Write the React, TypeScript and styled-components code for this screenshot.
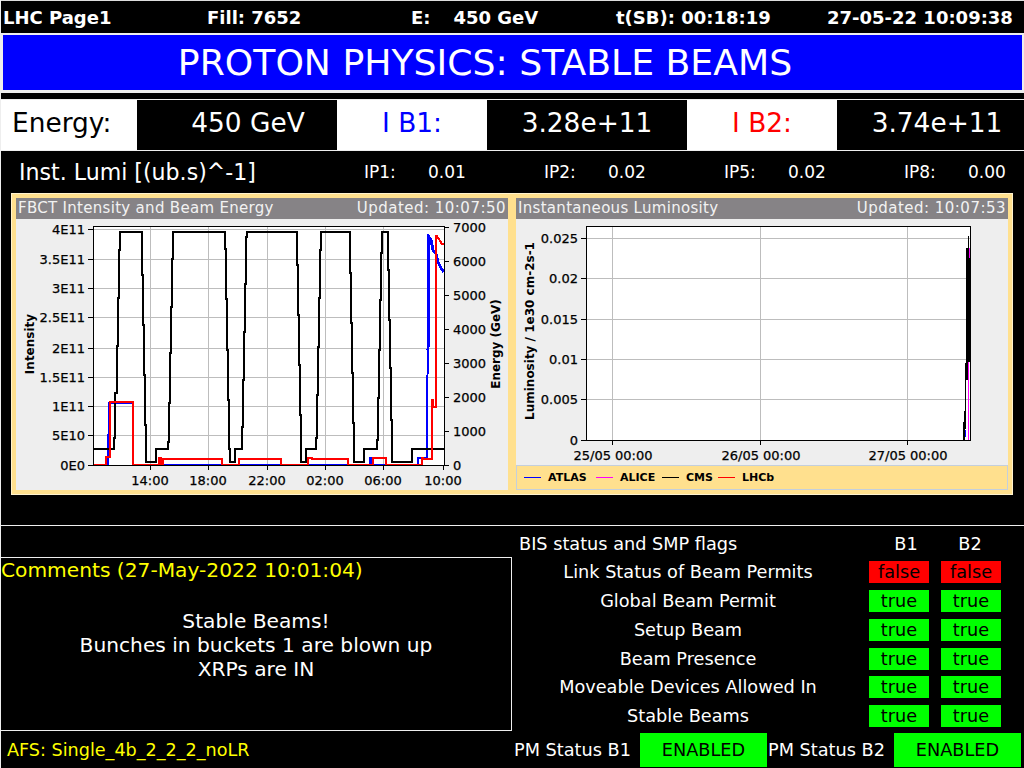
import React from 'react';
import styled, { createGlobalStyle } from 'styled-components';

const GlobalStyle = createGlobalStyle`
  html, body {
    margin: 0;
    padding: 0;
    background: #000;
  }
  body {
    font-family: "DejaVu Sans", "Liberation Sans", sans-serif;
    color: #fff;
  }
`;

const Page = styled.div`
  width: 1024px;
  height: 768px;
  box-sizing: border-box;
  overflow: hidden;
  background: #000;
  border-left: 1px solid #eee;
  display: flex;
  flex-direction: column;
`;

const TopBar = styled.div`
  height: 33px;
  box-sizing: border-box;
  border-top: 1px solid #ddd;
  display: grid;
  grid-template-columns: 204px 204px 205px 211px 197px;
  align-items: center;
  font-size: 18px;
  font-weight: bold;
  white-space: pre;
  padding-left: 2px;
`;

const TopValue = styled.span`
  margin-left: 23px;
`;

const Banner = styled.div`
  height: 60px;
  box-sizing: border-box;
  border-style: solid;
  border-color: #eee;
  border-width: 2px 2px 3px 2px;
  background: #0000ff;
  display: flex;
  align-items: center;
  justify-content: center;
  font-size: 36.2px;
  padding-right: 55px;
`;

const Measures = styled.div`
  margin-top: 6px;
  height: 52px;
  box-sizing: border-box;
  border-top: 1px solid #eee;
  border-bottom: 1px solid #eee;
  display: grid;
  grid-template-columns: 136px 200px 150px 200px 150px 187px;
  font-size: 26.4px;
`;

const MeasureLabel = styled.div<{ $color: string; $left?: boolean }>`
  background: #fff;
  color: ${(p) => p.$color};
  display: flex;
  align-items: center;
  justify-content: ${(p) => (p.$left ? 'flex-start' : 'center')};
  padding-left: ${(p) => (p.$left ? '11px' : '0')};
  padding-bottom: 5px;
  box-sizing: border-box;
`;

const MeasureValue = styled.div<{ $shift?: number }>`
  background: #000;
  display: flex;
  align-items: center;
  justify-content: center;
  padding-left: ${(p) => p.$shift ?? 0}px;
  padding-bottom: 5px;
  box-sizing: border-box;
`;

const Middle = styled.div`
  height: 375px;
  box-sizing: border-box;
  border-bottom: 1px solid #eee;
  display: flex;
  flex-direction: column;
`;

const LumiRow = styled.div`
  height: 42px;
  display: grid;
  grid-template-columns: 344px 180px 180px 180px 1fr;
  align-items: center;
  padding-left: 18px;
  font-size: 17px;
`;

const LumiTitle = styled.div`
  font-size: 22.1px;
`;

const LumiPoint = styled.div`
  display: grid;
  grid-template-columns: 64px 1fr;
  padding-left: 1px;
`;

const ChartFrame = styled.div`
  width: 992px;
  height: 292px;
  margin-left: 10px;
  padding: 4px;
  border: 1px solid #fff3cf;
  background: #ffe08e;
  display: grid;
  grid-template-columns: 492px 492px;
  column-gap: 8px;
`;

const Chart = styled.div`
  background: #eee;
  display: flex;
  flex-direction: column;
`;

const ChartHead = styled.div`
  height: 21px;
  box-sizing: border-box;
  background: #868386;
  color: #f2f2f2;
  font-size: 15px;
  display: flex;
  align-items: center;
  justify-content: space-between;
  padding: 0 2px 1px;
  letter-spacing: 0.3px;
`;

const ChartStamp = styled.span`
  letter-spacing: 0.48px;
`;

const ChartCanvas = styled.svg`
  display: block;
  font-family: "DejaVu Sans", sans-serif;
  font-size: 13px;
  fill: #000;
  stroke: #000;
  stroke-width: 0.25px;
`;

const Legend = styled.div`
  height: 25px;
  box-sizing: border-box;
  background: #ffe08e;
  border: 1px solid #c4cfdc;
  display: flex;
  align-items: center;
  padding-left: 7px;
  font-size: 11px;
  font-weight: bold;
  color: #000;
`;

const LegendItem = styled.span<{ $color: string; $width: number }>`
  display: flex;
  align-items: center;
  width: ${(p) => p.$width}px;
  &::before {
    content: '';
    width: 17px;
    height: 1px;
    background: ${(p) => p.$color};
    margin-right: 7px;
  }
`;

const Bottom = styled.div`
  flex: 1;
  display: grid;
  grid-template-columns: 511px 512px;
`;

const CommentsColumn = styled.div`
  padding-top: 31px;
  display: flex;
  flex-direction: column;
`;

const CommentsBox = styled.div`
  height: 174px;
  box-sizing: border-box;
  border: 1px solid #eee;
  border-left: none;
  display: flex;
  flex-direction: column;
`;

const CommentsTitle = styled.div`
  color: #ffff00;
  font-size: 20.2px;
  line-height: 25px;
`;

const CommentsBody = styled.div`
  font-size: 20.2px;
  line-height: 24px;
  text-align: center;
  margin-top: 26px;
`;

const Afs = styled.div`
  color: #ffff00;
  font-size: 17.6px;
  padding: 9px 0 0 6px;
`;

const FlagsColumn = styled.div`
  display: flex;
  flex-direction: column;
  padding-top: 6px;
`;

const FlagRow = styled.div`
  display: grid;
  grid-template-columns: 352px 60px 60px;
  column-gap: 0;
  height: 28.85px;
  align-items: center;
  font-size: 17.7px;
  text-align: center;
`;

const ChipPair = styled.div`
  display: grid;
  grid-template-columns: 60px 60px;
  column-gap: 12px;
  grid-column: 2 / 4;
  padding-left: 5px;
`;

const FlagHead = styled(FlagRow)`
  height: 24px;
  margin-bottom: 1.6px;
`;

const FlagHeadTitle = styled.div`
  text-align: left;
  padding-left: 7px;
`;

const HeadPair = styled(ChipPair)`
  column-gap: 4px;
  padding-left: 12px;
`;

const Chip = styled.div<{ $ok: boolean }>`
  height: 22px;
  line-height: 22px;
  text-align: center;
  color: #000;
  background: ${(p) => (p.$ok ? '#00ff00' : '#ff0000')};
`;

const PmRow = styled.div`
  margin-top: 2.3px;
  display: grid;
  grid-template-columns: 126px 128px 126px 128px;
  height: 34px;
  align-items: center;
  font-size: 17.7px;
  padding-left: 2px;
`;

const PmChip = styled.div`
  height: 34px;
  line-height: 34px;
  background: #00ff00;
  color: #000;
  text-align: center;
  margin-right: 1px;
`;

type Pt = [number, number];

const TOP = 232;
const BOT = 462;
const MID = 449;

const energy: Pt[] = [
  [93, MID], [114, MID], [114, 438], [115, 438], [115, 393], [117, 393], [117, 346], [118, 346], [118, 298], [119, 298], [119, 250], [120, 250], [120, TOP],
  [142, TOP], [142, 275], [143, 275], [143, 325], [144, 325], [144, 375], [145, 375], [145, 425], [146, 425], [146, BOT],
  [156, BOT], [156, MID], [168, MID], [168, 442], [169, 442], [169, 403], [170, 403], [170, 353], [171, 353], [171, 307], [172, 307], [172, 259], [173, 259], [173, TOP],
  [225, TOP], [225, 249], [226, 249], [226, 299], [227, 299], [227, 350], [228, 350], [228, 400], [229, 400], [229, MID], [230, MID], [230, BOT],
  [235, BOT], [235, MID], [242, MID], [242, 427], [243, 427], [243, 380], [244, 380], [244, 332], [245, 332], [245, 284], [246, 284], [246, 237], [247, 237], [247, TOP],
  [297, TOP], [297, 265], [298, 265], [298, 315], [299, 315], [299, 365], [300, 365], [300, 415], [301, 415], [301, BOT],
  [306, BOT], [306, MID], [316, MID], [316, 438], [317, 438], [317, 395], [318, 395], [318, 347], [319, 347], [319, 298], [320, 298], [320, 250], [321, 250], [321, TOP],
  [350, TOP], [350, 273], [351, 273], [351, 323], [352, 323], [352, 373], [353, 373], [353, 423], [354, 423], [354, BOT],
  [364, BOT], [364, MID], [377, MID], [377, 440], [378, 440], [378, 398], [379, 398], [379, 350], [380, 350], [380, 300], [381, 300], [381, 253], [382, 253], [382, TOP],
  [388, TOP], [388, 270], [389, 270], [389, 320], [390, 320], [390, 368], [391, 368], [391, 420], [392, 420], [392, BOT],
  [412, BOT], [412, MID], [444, MID],
];

const beamOne: Pt[] = [
  [93, 465], [108, 465], [109, 403], [133, 403], [133, 465], [370, 465], [370, 458], [372, 458], [372, 465], [418, 465], [418, 458], [427, 458],
  [427, 400], [428, 350],
];

// the last fill of beam 1 is drawn heavier
const beamOneTail: Pt[] = [
  [428, 350], [429, 237], [431, 240], [433, 250], [436, 254], [438, 262], [441, 268], [444, 272],
];

const beamTwo: Pt[] = [
  [93, 465], [106, 465], [106, 457], [110, 457], [110, 402], [133, 402], [133, 465],
  [159, 465], [159, 458], [161, 458], [161, 465], [163, 465], [163, 459], [222, 459], [222, 465], [239, 465], [239, 459], [281, 459], [281, 465],
  [308, 465], [308, 458], [312, 458], [312, 459], [348, 459], [348, 465], [373, 465], [373, 458], [386, 458], [386, 465],
  [420, 465], [422, 465], [422, 458], [423, 458], [423, 459], [432, 459], [432, 400], [433, 400], [433, 407], [436, 407], [436, 236], [437, 236], [442, 244], [444, 244],
];

const toPoints = (pts: Pt[]) => pts.map(([x, y]) => `${x},${y}`).join(' ');

const leftRows: [string, number][] = [
  ['4E11', 229], ['3.5E11', 259], ['3E11', 288], ['2.5E11', 317], ['2E11', 348],
  ['1.5E11', 377], ['1E11', 406], ['5E10', 435], ['0E0', 465],
];
const leftTimes: [string, number][] = [
  ['14:00', 150], ['18:00', 208], ['22:00', 267], ['02:00', 325], ['06:00', 383], ['10:00', 443],
];
const energyTicks: [string, number][] = [
  ['7000', 227], ['6000', 261], ['5000', 295], ['4000', 329], ['3000', 363], ['2000', 397], ['1000', 431], ['0', 465],
];
const lumiRows: [string, number][] = [
  ['0.025', 238], ['0.02', 278], ['0.015', 319], ['0.01', 359], ['0.005', 399], ['0', 440],
];
const lumiDays: [string, number][] = [
  ['25/05 00:00', 613], ['26/05 00:00', 761], ['27/05 00:00', 908],
];

const GRID = '#bdbdbd';

const BeamChart = () => (
  <ChartCanvas width={492} height={271} viewBox="16 219 492 271">
    <rect x={93} y={226} width={351} height={239} fill="#fff" stroke="none" />
    <g shapeRendering="crispEdges" strokeWidth={1}>
      {leftRows.slice(0, -1).map(([, y]) => (
        <line key={y} x1={93} x2={444} y1={y} y2={y} stroke={GRID} />
      ))}
      {leftTimes.slice(0, -1).map(([, x]) => (
        <line key={x} x1={x} x2={x} y1={226} y2={465} stroke={GRID} />
      ))}
      {leftRows.map(([, y]) => (
        <line key={y} x1={88} x2={93} y1={y} y2={y} stroke="#000" />
      ))}
      {leftTimes.map(([, x]) => (
        <line key={x} x1={x} x2={x} y1={465} y2={470} stroke="#000" />
      ))}
      {energyTicks.map(([, y]) => (
        <line key={y} x1={444} x2={449} y1={y} y2={y} stroke="#000" />
      ))}
    </g>
    <g shapeRendering="crispEdges" fill="none" strokeWidth={2}>
      <polyline points={toPoints(beamOne)} stroke="#0000ff" />
      <polyline points={toPoints(beamOneTail)} stroke="#0000ff" strokeWidth={3} />
      <polyline points={toPoints(energy)} stroke="#000" />
      <polyline points={toPoints(beamTwo)} stroke="#ff0000" />
    </g>
    <rect x={93.5} y={226.5} width={351} height={239} fill="none" stroke="#000" strokeWidth={1} shapeRendering="crispEdges" />
    {leftRows.map(([t, y]) => (
      <text key={t} x={85} y={y + 5} textAnchor="end">{t}</text>
    ))}
    {leftTimes.map(([t, x]) => (
      <text key={t} x={x} y={485} textAnchor="middle">{t}</text>
    ))}
    {energyTicks.map(([t, y]) => (
      <text key={t} x={453} y={y + 5}>{t}</text>
    ))}
    <text transform="translate(34 344) rotate(-90)" textAnchor="middle" fontWeight="bold" fontSize={12} strokeWidth={0}>Intensity</text>
    <text transform="translate(500 344) rotate(-90)" textAnchor="middle" fontWeight="bold" fontSize={12} strokeWidth={0}>Energy (GeV)</text>
  </ChartCanvas>
);

const LumiChart = () => (
  <ChartCanvas width={492} height={246} viewBox="516 219 492 246">
    <rect x={586} y={226} width={384} height={214} fill="#fff" stroke="none" />
    <g shapeRendering="crispEdges" strokeWidth={1}>
      {lumiRows.slice(0, -1).map(([, y]) => (
        <line key={y} x1={586} x2={970} y1={y} y2={y} stroke={GRID} />
      ))}
      {[612, 760, 907].map((x) => (
        <line key={x} x1={x} x2={x} y1={226} y2={440} stroke={GRID} />
      ))}
      {lumiRows.map(([, y]) => (
        <line key={y} x1={581} x2={586} y1={y} y2={y} stroke="#000" />
      ))}
      {[612, 760, 907].map((x) => (
        <line key={x} x1={x} x2={x} y1={440} y2={445} stroke="#000" />
      ))}
    </g>
    <g shapeRendering="crispEdges" stroke="none">
      <rect x={963} y={422} width={1} height={18} fill="#000" />
      <rect x={964} y={411} width={1} height={29} fill="#000" />
      <rect x={965} y={363} width={1} height={66} fill="#000" />
      <rect x={966} y={248} width={2} height={132} fill="#000" />
      <rect x={968} y={254} width={2} height={108} fill="#000" />
      <rect x={968} y={236} width={1} height={18} fill="#000" />
      <rect x={965} y={430} width={1} height={7} fill="#0000ff" />
      <rect x={969} y={248} width={1} height={10} fill="#ff00ff" />
      <rect x={968} y={362} width={1} height={78} fill="#ff00ff" />
      <rect x={963} y={440} width={7} height={1} fill="#ff00ff" />
    </g>
    <rect x={586.5} y={226.5} width={384} height={214} fill="none" stroke="#000" strokeWidth={1} shapeRendering="crispEdges" />
    {lumiRows.map(([t, y]) => (
      <text key={t} x={578} y={y + 5} textAnchor="end">{t}</text>
    ))}
    {lumiDays.map(([t, x]) => (
      <text key={t} x={x} y={460} textAnchor="middle">{t}</text>
    ))}
    <text transform="translate(534 331) rotate(-90)" textAnchor="middle" fontWeight="bold" fontSize={12} strokeWidth={0}>Luminosity / 1e30 cm-2s-1</text>
  </ChartCanvas>
);

const flags: [string, boolean][] = [
  ['Link Status of Beam Permits', false],
  ['Global Beam Permit', true],
  ['Setup Beam', true],
  ['Beam Presence', true],
  ['Moveable Devices Allowed In', true],
  ['Stable Beams', true],
];

const lumi: [string, string][] = [
  ['IP1:', '0.01'],
  ['IP2:', '0.02'],
  ['IP5:', '0.02'],
  ['IP8:', '0.00'],
];

const App = () => (
  <Page>
    <GlobalStyle />
    <TopBar>
      <span>LHC Page1</span>
      <span>Fill: 7652</span>
      <span>E:<TopValue>450 GeV</TopValue></span>
      <span>t(SB): 00:18:19</span>
      <span>27-05-22 10:09:38</span>
    </TopBar>
    <Banner>PROTON PHYSICS: STABLE BEAMS</Banner>
    <Measures>
      <MeasureLabel $color="#000" $left>Energy:</MeasureLabel>
      <MeasureValue $shift={22}>450 GeV</MeasureValue>
      <MeasureLabel $color="#0000ff">I B1:</MeasureLabel>
      <MeasureValue>3.28e+11</MeasureValue>
      <MeasureLabel $color="#ff0000">I B2:</MeasureLabel>
      <MeasureValue $shift={13}>3.74e+11</MeasureValue>
    </Measures>
    <Middle>
      <LumiRow>
        <LumiTitle>Inst. Lumi [(ub.s)^-1]</LumiTitle>
        {lumi.map(([ip, value]) => (
          <LumiPoint key={ip}>
            <span>{ip}</span>
            <span>{value}</span>
          </LumiPoint>
        ))}
      </LumiRow>
      <ChartFrame>
        <Chart>
          <ChartHead>
            <span>FBCT Intensity and Beam Energy</span>
            <ChartStamp>Updated: 10:07:50</ChartStamp>
          </ChartHead>
          <BeamChart />
        </Chart>
        <Chart>
          <ChartHead>
            <span>Instantaneous Luminosity</span>
            <ChartStamp>Updated: 10:07:53</ChartStamp>
          </ChartHead>
          <LumiChart />
          <Legend>
            <LegendItem $color="#0000ff" $width={72}>ATLAS</LegendItem>
            <LegendItem $color="#ff00ff" $width={66}>ALICE</LegendItem>
            <LegendItem $color="#000" $width={56}>CMS</LegendItem>
            <LegendItem $color="#ff0000" $width={60}>LHCb</LegendItem>
          </Legend>
        </Chart>
      </ChartFrame>
    </Middle>
    <Bottom>
      <CommentsColumn>
        <CommentsBox>
          <CommentsTitle>Comments (27-May-2022 10:01:04)</CommentsTitle>
          <CommentsBody>
            Stable Beams!
            <br />
            Bunches in buckets 1 are blown up
            <br />
            XRPs are IN
          </CommentsBody>
        </CommentsBox>
        <Afs>AFS: Single_4b_2_2_2_noLR</Afs>
      </CommentsColumn>
      <FlagsColumn>
        <FlagHead>
          <FlagHeadTitle>BIS status and SMP flags</FlagHeadTitle>
          <HeadPair>
            <span>B1</span>
            <span>B2</span>
          </HeadPair>
        </FlagHead>
        {flags.map(([label, ok]) => (
          <FlagRow key={label}>
            <span>{label}</span>
            <ChipPair>
              <Chip $ok={ok}>{ok ? 'true' : 'false'}</Chip>
              <Chip $ok={ok}>{ok ? 'true' : 'false'}</Chip>
            </ChipPair>
          </FlagRow>
        ))}
        <PmRow>
          <span>PM Status B1</span>
          <PmChip>ENABLED</PmChip>
          <span>PM Status B2</span>
          <PmChip>ENABLED</PmChip>
        </PmRow>
      </FlagsColumn>
    </Bottom>
  </Page>
);

export default App;
